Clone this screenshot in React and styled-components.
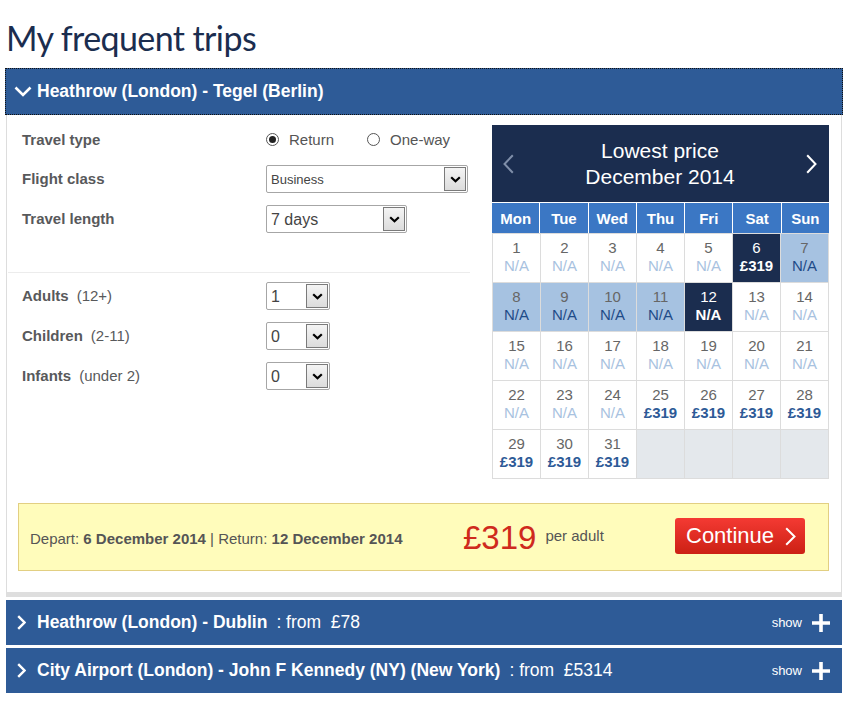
import React from "react";
import styled, { createGlobalStyle } from "styled-components";

const Global = createGlobalStyle`
  html, body { margin: 0; padding: 0; background: #fff; }
  body { font-family: "Liberation Sans", Arial, sans-serif; }
  * { box-sizing: border-box; }
`;

const Page = styled.div`
  width: 838px;
  margin-left: 5px;
`;

const Title = styled.h1`
  margin: 0;
  padding: 16px 0 0 1px;
  height: 68px;
  font-family: Lato, "Open Sans", sans-serif;
  font-weight: 400;
  font-size: 34px;
  letter-spacing: -0.6px;
  line-height: 44px;
  color: #1b2d4f;
`;

const TripHeader = styled.div`
  display: flex;
  align-items: center;
  height: ${(p) => (p.$open ? "47px" : "45px")};
  margin: ${(p) => (p.$open ? "0" : "3px 1px 0")};
  padding: ${(p) => (p.$open ? "0 12px 0 8px" : "0 12px 0 10px")};
  background: #2e5b97;
  border: ${(p) => (p.$open ? "1px dotted #111" : "none")};
  color: #fff;
  font-size: 17.5px;
`;

const ChevronBox = styled.span`
  width: ${(p) => (p.$open ? "23px" : "21px")};
  flex-shrink: 0;
  display: flex;
  align-items: center;
  padding-left: ${(p) => (p.$open ? "0" : "1px")};
`;

const Route = styled.span`
  font-weight: bold;
`;

const FromPrice = styled.span`
  margin-left: 9px;
  white-space: pre;
`;

const Show = styled.span`
  margin-left: auto;
  display: flex;
  align-items: center;
  gap: 10px;
  font-size: 13px;
`;

const Panel = styled.div`
  margin: 0 1px;
  border-left: 1px solid #ddd;
  border-right: 1px solid #ddd;
  border-bottom: 5px solid #dedede;
  padding: 10px 12px 21px 0;
`;

const TopArea = styled.div`
  display: flex;
  justify-content: space-between;
`;

const FormCol = styled.div`
  width: 463px;
  flex-shrink: 0;
`;

const FormGroup = styled.div`
  padding-left: 15px;
  display: flex;
  flex-direction: column;
  gap: 12px;
`;

const Row = styled.div`
  display: flex;
  align-items: center;
  height: 28px;
`;

const Label = styled.div`
  width: 244px;
  flex-shrink: 0;
  font-size: 15px;
  font-weight: bold;
  color: #58595b;
  white-space: nowrap;
  margin-top: ${(p) => p.$lift || "-2px"};
`;

const Sub = styled.span`
  font-weight: normal;
  margin-left: 8px;
`;

const Divider = styled.div`
  height: 1px;
  background: #ececec;
  margin: 39px 0 9px 1px;
`;

const RadioGroup = styled.div`
  display: flex;
  align-items: center;
  font-size: 15px;
  color: #555;
  white-space: nowrap;
`;

const RadioItem = styled.label`
  display: flex;
  align-items: center;
  gap: 10px;
  margin-right: 33px;
`;

const RadioCircle = styled.span`
  width: 13px;
  height: 13px;
  border-radius: 50%;
  border: 1px solid #555;
  background: #fff;
  display: flex;
  align-items: center;
  justify-content: center;
  &::after {
    content: "";
    width: 7px;
    height: 7px;
    border-radius: 50%;
    background: ${(p) => (p.$checked ? "#222" : "transparent")};
  }
`;

const SelectBox = styled.div`
  width: ${(p) => p.$w}px;
  height: 28px;
  border: 1px solid #a6a6a6;
  border-radius: 2px;
  background: #fff;
  display: flex;
  align-items: center;
  padding: 1px;
  font-size: ${(p) => p.$fs || 16}px;
  color: #444;
`;

const SelectValue = styled.span`
  flex: 1;
  padding-left: 3px;
  padding-top: 1px;
`;

const ArrowBox = styled.span`
  width: 22px;
  height: 100%;
  border: 1px solid #7a7a7a;
  background: linear-gradient(#f4f4f4, #dcdcdc);
  display: flex;
  align-items: center;
  justify-content: center;
`;

const Calendar = styled.div`
  width: 337px;
`;

const CalHead = styled.div`
  height: 77px;
  background: #1b2d4f;
  color: #fff;
  display: flex;
  align-items: center;
  justify-content: space-between;
  padding: 0 12px 0 11px;
`;

const CalTitle = styled.div`
  text-align: center;
  font-size: 21px;
  line-height: 26px;
  padding-top: 1px;
`;

const DayRow = styled.div`
  display: grid;
  grid-template-columns: repeat(7, 1fr);
  gap: 1px;
  background: #fff;
  padding-top: 1px;
`;

const DayName = styled.div`
  height: 30px;
  background: #3b77c4;
  color: #fff;
  font-weight: bold;
  font-size: 15px;
  display: flex;
  align-items: center;
  justify-content: center;
`;

const DaysGrid = styled.div`
  display: grid;
  grid-template-columns: repeat(7, 1fr);
  gap: 1px;
  padding: 1px;
  background: #dcdcdc;
`;

const cellBg = { normal: "#fff", light: "#a6c2e1", dark: "#1b2d4f", empty: "#e4e8ec" };

const Cell = styled.div`
  height: 48px;
  background: ${(p) => cellBg[p.$kind]};
  display: flex;
  flex-direction: column;
  align-items: center;
  padding-top: 5px;
  font-size: 15px;
  line-height: 18px;
`;

const DayNum = styled.span`
  color: ${(p) => (p.$kind === "dark" ? "#fff" : "#666")};
`;

const DayVal = styled.span`
  color: ${(p) =>
    p.$kind === "dark"
      ? "#fff"
      : p.$price
      ? "#2d5a97"
      : p.$kind === "light"
      ? "#1f4b88"
      : "#a8c2e0"};
  font-weight: ${(p) => (p.$price || p.$kind === "dark" ? "bold" : "normal")};
`;

const Summary = styled.div`
  margin: 24px 0 0 11px;
  height: 68px;
  background: #fffcbb;
  border: 1px solid #e2cf82;
  display: flex;
  align-items: center;
  padding: 0 23px 0 11px;
`;

const Dates = styled.div`
  width: 433px;
  flex-shrink: 0;
  font-size: 15px;
  color: #555;
  padding-top: 2px;
`;

const Price = styled.span`
  font-size: 33px;
  color: #cf2a1d;
  margin-top: 1px;
`;

const PerAdult = styled.span`
  font-size: 15px;
  color: #555;
  margin-left: 9px;
  margin-top: -4px;
`;

const ContinueBtn = styled.button`
  margin-left: auto;
  width: 130px;
  height: 36px;
  border: none;
  border-radius: 3px;
  background: linear-gradient(#f43a33, #cc2014);
  color: #fff;
  font-family: "Liberation Sans", Arial, sans-serif;
  font-size: 22px;
  display: flex;
  align-items: center;
  padding: 0 0 0 11px;
  gap: 11px;
  margin-top: -2px;
`;

const ChevRight = ({ w = 9, h = 15, color = "#fff", sw = 2.5 }) => (
  <svg width={w} height={h} viewBox={`0 0 ${w} ${h}`}>
    <path d={`M1.2 1.2 L${w - 1.5} ${h / 2} L1.2 ${h - 1.2}`} fill="none" stroke={color} strokeWidth={sw} />
  </svg>
);

const ChevLeft = ({ w = 9, h = 15, color = "#fff", sw = 2 }) => (
  <svg width={w} height={h} viewBox={`0 0 ${w} ${h}`}>
    <path d={`M${w - 1.2} 1.2 L1.5 ${h / 2} L${w - 1.2} ${h - 1.2}`} fill="none" stroke={color} strokeWidth={sw} />
  </svg>
);

const ChevDown = () => (
  <svg width="18" height="11" viewBox="0 0 18 11">
    <path d="M1.5 1.5 L9 9 L16.5 1.5" fill="none" stroke="#fff" strokeWidth="2.6" />
  </svg>
);

const SmallDown = () => (
  <svg width="11" height="7" viewBox="0 0 11 7">
    <path d="M1.2 1.2 L5.5 5.3 L9.8 1.2" fill="none" stroke="#000" strokeWidth="2.2" />
  </svg>
);

const Plus = () => (
  <svg width="18" height="18" viewBox="0 0 18 18">
    <path d="M9 0 V18 M0 9 H18" stroke="#fff" strokeWidth="3.6" />
  </svg>
);

const Select = ({ w, fs, value }) => (
  <SelectBox $w={w} $fs={fs}>
    <SelectValue>{value}</SelectValue>
    <ArrowBox>
      <SmallDown />
    </ArrowBox>
  </SelectBox>
);

const days = ["Mon", "Tue", "Wed", "Thu", "Fri", "Sat", "Sun"];

const cells = [];
for (let d = 1; d <= 31; d++) {
  let kind = "normal";
  if (d === 6 || d === 12) kind = "dark";
  else if (d >= 7 && d <= 11) kind = "light";
  const price = d === 6 || d >= 25;
  cells.push({ d, kind, val: price ? "£319" : "N/A", price });
}
for (let i = 0; i < 4; i++) cells.push({ d: null, kind: "empty" });

const ClosedTrip = ({ route, from }) => (
  <TripHeader>
    <ChevronBox>
      <ChevRight w={9} h={15} sw={2.4} />
    </ChevronBox>
    <Route>{route}</Route>
    <FromPrice>{from}</FromPrice>
    <Show>
      show
      <Plus />
    </Show>
  </TripHeader>
);

export default function App() {
  return (
    <Page>
      <Global />
      <Title>My frequent trips</Title>
      <TripHeader $open>
        <ChevronBox $open>
          <ChevDown />
        </ChevronBox>
        <Route>Heathrow (London) - Tegel (Berlin)</Route>
      </TripHeader>
      <Panel>
        <TopArea>
          <FormCol>
            <FormGroup>
              <Row>
                <Label $lift="0px">Travel type</Label>
                <RadioGroup>
                  <RadioItem>
                    <RadioCircle $checked />
                    Return
                  </RadioItem>
                  <RadioItem>
                    <RadioCircle />
                    One-way
                  </RadioItem>
                </RadioGroup>
              </Row>
              <Row>
                <Label>Flight class</Label>
                <Select w={202} fs={13} value="Business" />
              </Row>
              <Row>
                <Label>Travel length</Label>
                <Select w={141} fs={16} value="7 days" />
              </Row>
            </FormGroup>
            <Divider />
            <FormGroup>
              <Row>
                <Label>
                  Adults<Sub>(12+)</Sub>
                </Label>
                <Select w={64} fs={16} value="1" />
              </Row>
              <Row>
                <Label>
                  Children<Sub>(2-11)</Sub>
                </Label>
                <Select w={64} fs={16} value="0" />
              </Row>
              <Row>
                <Label>
                  Infants<Sub>(under 2)</Sub>
                </Label>
                <Select w={64} fs={16} value="0" />
              </Row>
            </FormGroup>
          </FormCol>
          <Calendar>
            <CalHead>
              <ChevLeft w={11} h={20} color="#7f8ea9" sw={2} />
              <CalTitle>
                Lowest price
                <br />
                December 2014
              </CalTitle>
              <ChevRight w={11} h={20} color="#fff" sw={2} />
            </CalHead>
            <DayRow>
              {days.map((d) => (
                <DayName key={d}>{d}</DayName>
              ))}
            </DayRow>
            <DaysGrid>
              {cells.map((c, i) => (
                <Cell key={i} $kind={c.kind}>
                  {c.d && (
                    <>
                      <DayNum $kind={c.kind}>{c.d}</DayNum>
                      <DayVal $kind={c.kind} $price={c.price}>
                        {c.val}
                      </DayVal>
                    </>
                  )}
                </Cell>
              ))}
            </DaysGrid>
          </Calendar>
        </TopArea>
        <Summary>
          <Dates>
            Depart: <b>6 December 2014</b> | Return: <b>12 December 2014</b>
          </Dates>
          <Price>£319</Price>
          <PerAdult>per adult</PerAdult>
          <ContinueBtn>
            Continue
            <ChevRight w={11} h={19} sw={2} />
          </ContinueBtn>
        </Summary>
      </Panel>
      <ClosedTrip route="Heathrow (London) - Dublin" from={": from  £78"} />
      <ClosedTrip route="City Airport (London) - John F Kennedy (NY) (New York)" from={": from  £5314"} />
    </Page>
  );
}
